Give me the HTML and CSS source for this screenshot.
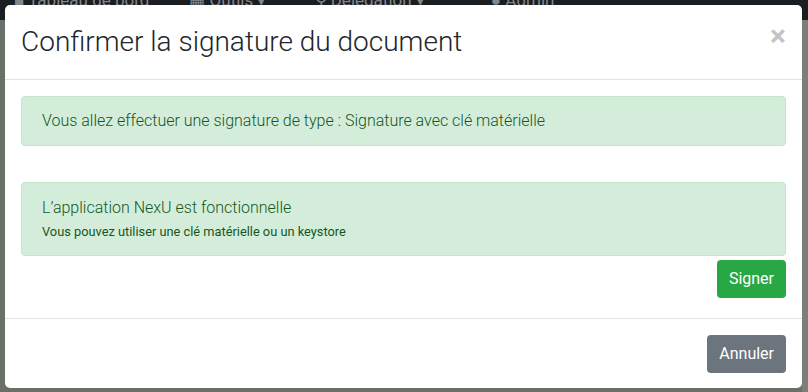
FILE: index.html
```html
<!DOCTYPE html>
<html>

<head>
    <meta charset="utf-8">
    <title>Confirmer la signature</title>
    <meta name="viewport" content="width=device-width, initial-scale=1.0">
    <link rel="stylesheet" href="styles.css">
</head>

<body>
    <nav class="navbar">
        <span class="nav-item tableau">&#9632; Tableau de bord</span>
        <span class="nav-item outils">&#9638; Outils &#9662;</span>
        <span class="nav-item delegation">&#9906; Délégation &#9662;</span>
        <span class="nav-item">&#9679; Admin</span>
    </nav>
    <div class="page"></div>

    <div class="modal">
        <div class="modal-header">
            <h4 class="modal-title">Confirmer la signature du document</h4>
            <span class="close">&times;</span>
        </div>
        <div class="modal-body">
            <div class="alert first">
                Vous allez effectuer une signature de type : Signature avec clé matérielle
            </div>
            <div class="alert second">
                <div>L’application NexU est fonctionnelle</div>
                <small>Vous pouvez utiliser une clé matérielle ou un keystore</small>
            </div>
            <div class="actions">
                <button class="btn btn-success">Signer</button>
            </div>
        </div>
        <div class="modal-footer">
            <button class="btn btn-secondary">Annuler</button>
        </div>
    </div>
</body>

</html>
```

FILE: styles.css
```css
html,
body {
    height: 100%;
    overflow: hidden;
    margin: 0;
    padding: 0;
}

* {
    box-sizing: border-box;
}

body {
    font-family: Roboto, "Liberation Sans", sans-serif;
    background-color: #6a7068;
    display: flex;
    flex-direction: column;
}

.navbar {
    height: 20px;
    background-color: #1b1e21;
    display: flex;
    align-items: flex-end;
    padding: 0 0 11px 14px;
    color: #83878b;
    font-size: 17px;
    line-height: 17px;
    white-space: nowrap;
}

.nav-item.tableau {
    margin-right: 40px;
}

.nav-item.outils {
    margin-right: 48px;
}

.nav-item.delegation {
    margin-right: 66px;
}

.page {
    flex: 1;
    border-right: 6px solid #7a7f78;
}

.modal {
    position: absolute;
    left: 5px;
    top: 5px;
    width: 797px;
    height: 383px;
    background-color: #fff;
    border-radius: 5px;
    display: flex;
    flex-direction: column;
}

.modal-header {
    display: flex;
    justify-content: space-between;
    align-items: flex-start;
    padding: 16px;
    height: 75px;
    border-bottom: 1px solid #e2e3e5;
}

.modal-title {
    margin: 0;
    font-size: 28px;
    font-weight: 300;
    line-height: 42px;
    color: #212529;
}

.close {
    font-size: 30px;
    font-weight: 700;
    line-height: 22px;
    color: #c4c4c4;
    margin-top: 4px;
}

.modal-body {
    padding: 16px 16px 20px;
    flex: 1;
}

.alert {
    background-color: #d4edda;
    border: 1px solid #c3e6cb;
    border-radius: 4px;
    color: #155724;
    font-size: 16px;
    font-weight: 300;
    padding: 12px 20px;
    line-height: 24px;
}

.alert.first {
    height: 50px;
    margin-bottom: 36px;
}

.alert.second {
    height: 74px;
    padding-top: 13px;
}

.alert small {
    display: block;
    font-size: 12.8px;
    font-weight: 400;
    line-height: 24px;
}

.actions {
    display: flex;
    justify-content: flex-end;
    margin-top: 4px;
}

.btn {
    font-family: Roboto, "Liberation Sans", sans-serif;
    font-size: 16px;
    line-height: 24px;
    padding: 7px 12px;
    height: 38px;
    border: 0;
    border-radius: 4px;
    color: #fff;
}

.btn-success {
    background-color: #28a745;
}

.btn-secondary {
    background-color: #6c757d;
}

.modal-footer {
    height: 70px;
    border-top: 1px solid #e2e3e5;
    display: flex;
    justify-content: flex-end;
    align-items: flex-start;
    padding: 16px;
}
```
